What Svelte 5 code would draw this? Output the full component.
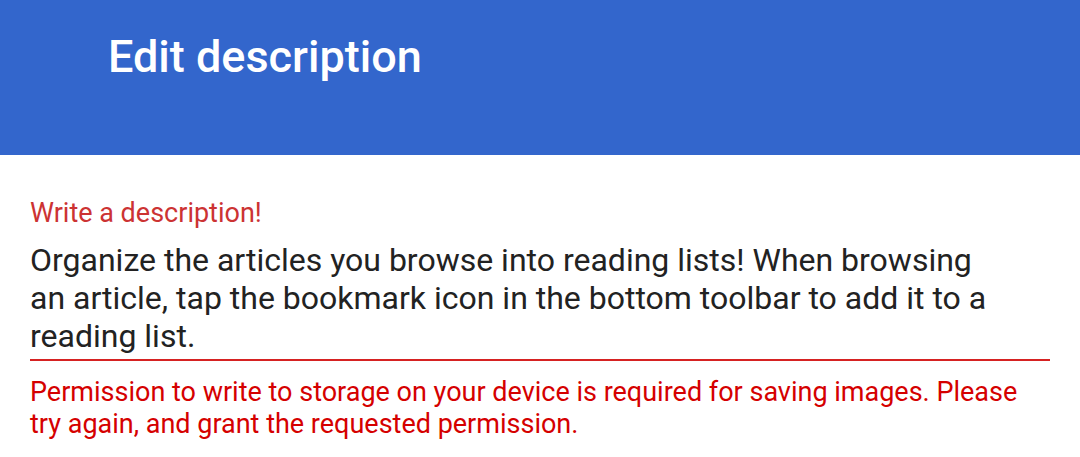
<script>
  let description = $state('Organize the articles you browse into reading lists! When browsing an article, tap the bookmark icon in the bottom toolbar to add it to a reading list.');
</script>

<header>
  <h1>Edit description</h1>
</header>
<main>
  <label for="description">Write a description!</label>
  <textarea id="description" rows="3" aria-describedby="error" aria-invalid="true" spellcheck="false" bind:value={description}></textarea>
  <p id="error" role="alert">Permission to write to storage on your device is required for saving images. Please try again, and grant the requested permission.</p>
</main>

<style>
  :global(body) {
    margin: 0;
    background: #fff;
    font-family: Roboto, sans-serif;
  }
  header {
    box-sizing: border-box;
    min-height: 155px;
    padding: 30px 108px;
    background: #3366cc;
    color: #fff;
  }
  h1 {
    margin: 0;
    font-size: 45px;
    line-height: 54px;
    font-weight: 500;
  }
  main {
    display: flex;
    flex-direction: column;
    padding: 42px 30px 16px;
  }
  label {
    color: #cc3333;
    font-size: 27px;
    line-height: 32px;
  }
  textarea {
    margin: 12px 0 0;
    padding: 0 50px 4px 0;
    border: 0;
    border-bottom: 2px solid #d62222;
    border-radius: 0;
    outline: 0;
    resize: none;
    overflow: hidden;
    background: transparent;
    color: #222;
    font: 400 32px/38px Roboto, sans-serif;
  }
  p {
    margin: 15px 0 0;
    color: #d50000;
    font-size: 27px;
    line-height: 32px;
  }
</style>
